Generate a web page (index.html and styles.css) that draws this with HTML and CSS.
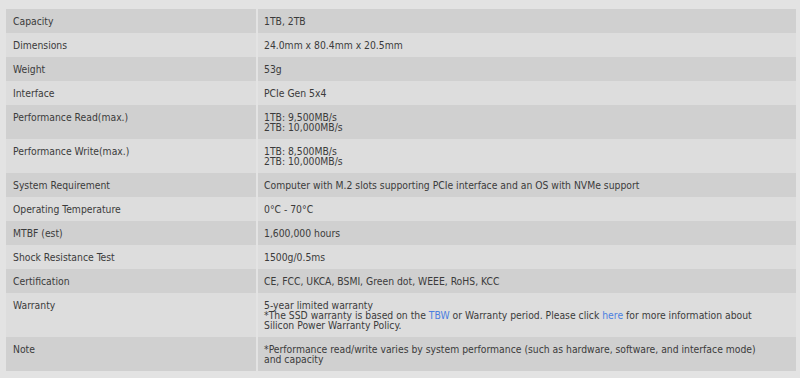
FILE: index.html
```html
<!DOCTYPE html>
<html lang="en">
<head>
<meta charset="utf-8">
<title>Specifications</title>
<link rel="stylesheet" href="styles.css">
</head>
<body>
<div class="wrap">
<table class="spec">
<tbody>
<tr class="dark"><th>Capacity</th><td>1TB, 2TB</td></tr>
<tr><th>Dimensions</th><td>24.0mm x 80.4mm x 20.5mm</td></tr>
<tr class="dark"><th>Weight</th><td>53g</td></tr>
<tr><th>Interface</th><td>PCIe Gen 5x4</td></tr>
<tr class="dark"><th>Performance Read(max.)</th><td>1TB: 9,500MB/s<br>2TB: 10,000MB/s</td></tr>
<tr><th>Performance Write(max.)</th><td>1TB: 8,500MB/s<br>2TB: 10,000MB/s</td></tr>
<tr class="dark"><th>System Requirement</th><td>Computer with M.2 slots supporting PCIe interface and an OS with NVMe support</td></tr>
<tr><th>Operating Temperature</th><td>0°C - 70°C</td></tr>
<tr class="dark"><th>MTBF (est)</th><td>1,600,000 hours</td></tr>
<tr><th>Shock Resistance Test</th><td>1500g/0.5ms</td></tr>
<tr class="dark"><th>Certification</th><td>CE, FCC, UKCA, BSMI, Green dot, WEEE, RoHS, KCC</td></tr>
<tr><th>Warranty</th><td>5-year limited warranty<br>*The SSD warranty is based on the <a href="#">TBW</a> or Warranty period. Please click <a href="#">here</a> for more information about Silicon Power Warranty Policy.</td></tr>
<tr class="dark"><th>Note</th><td>*Performance read/write varies by system performance (such as hardware, software, and interface mode) and capacity</td></tr>
</tbody>
</table>
</div>
</body>
</html>
```
FILE: styles.css
```css
html, body {
  margin: 0;
  padding: 0;
  background: #e3e3e3;
}
.wrap {
  padding: 9px 2px 0 4px;
}
.spec {
  width: 100%;
  border-collapse: separate;
  border-spacing: 2px 0;
  font-family: "DejaVu Sans Condensed", "DejaVu Sans", sans-serif;
  font-stretch: condensed;
  font-size: 10.3px;
  line-height: 10px;
  color: #3b3b3b;
}
.spec th, .spec td {
  text-align: left;
  vertical-align: top;
  font-weight: normal;
  padding: 7px 7px 7px 7px;
  background: #dddddd;
}
.spec th {
  width: 236px;
}
.spec td {
  padding-left: 6px;
  padding-right: 20px;
}
.spec tr.dark th, .spec tr.dark td {
  background: #d0d0d0;
}
.spec a {
  color: #4b7fe0;
  text-decoration: none;
}
```
